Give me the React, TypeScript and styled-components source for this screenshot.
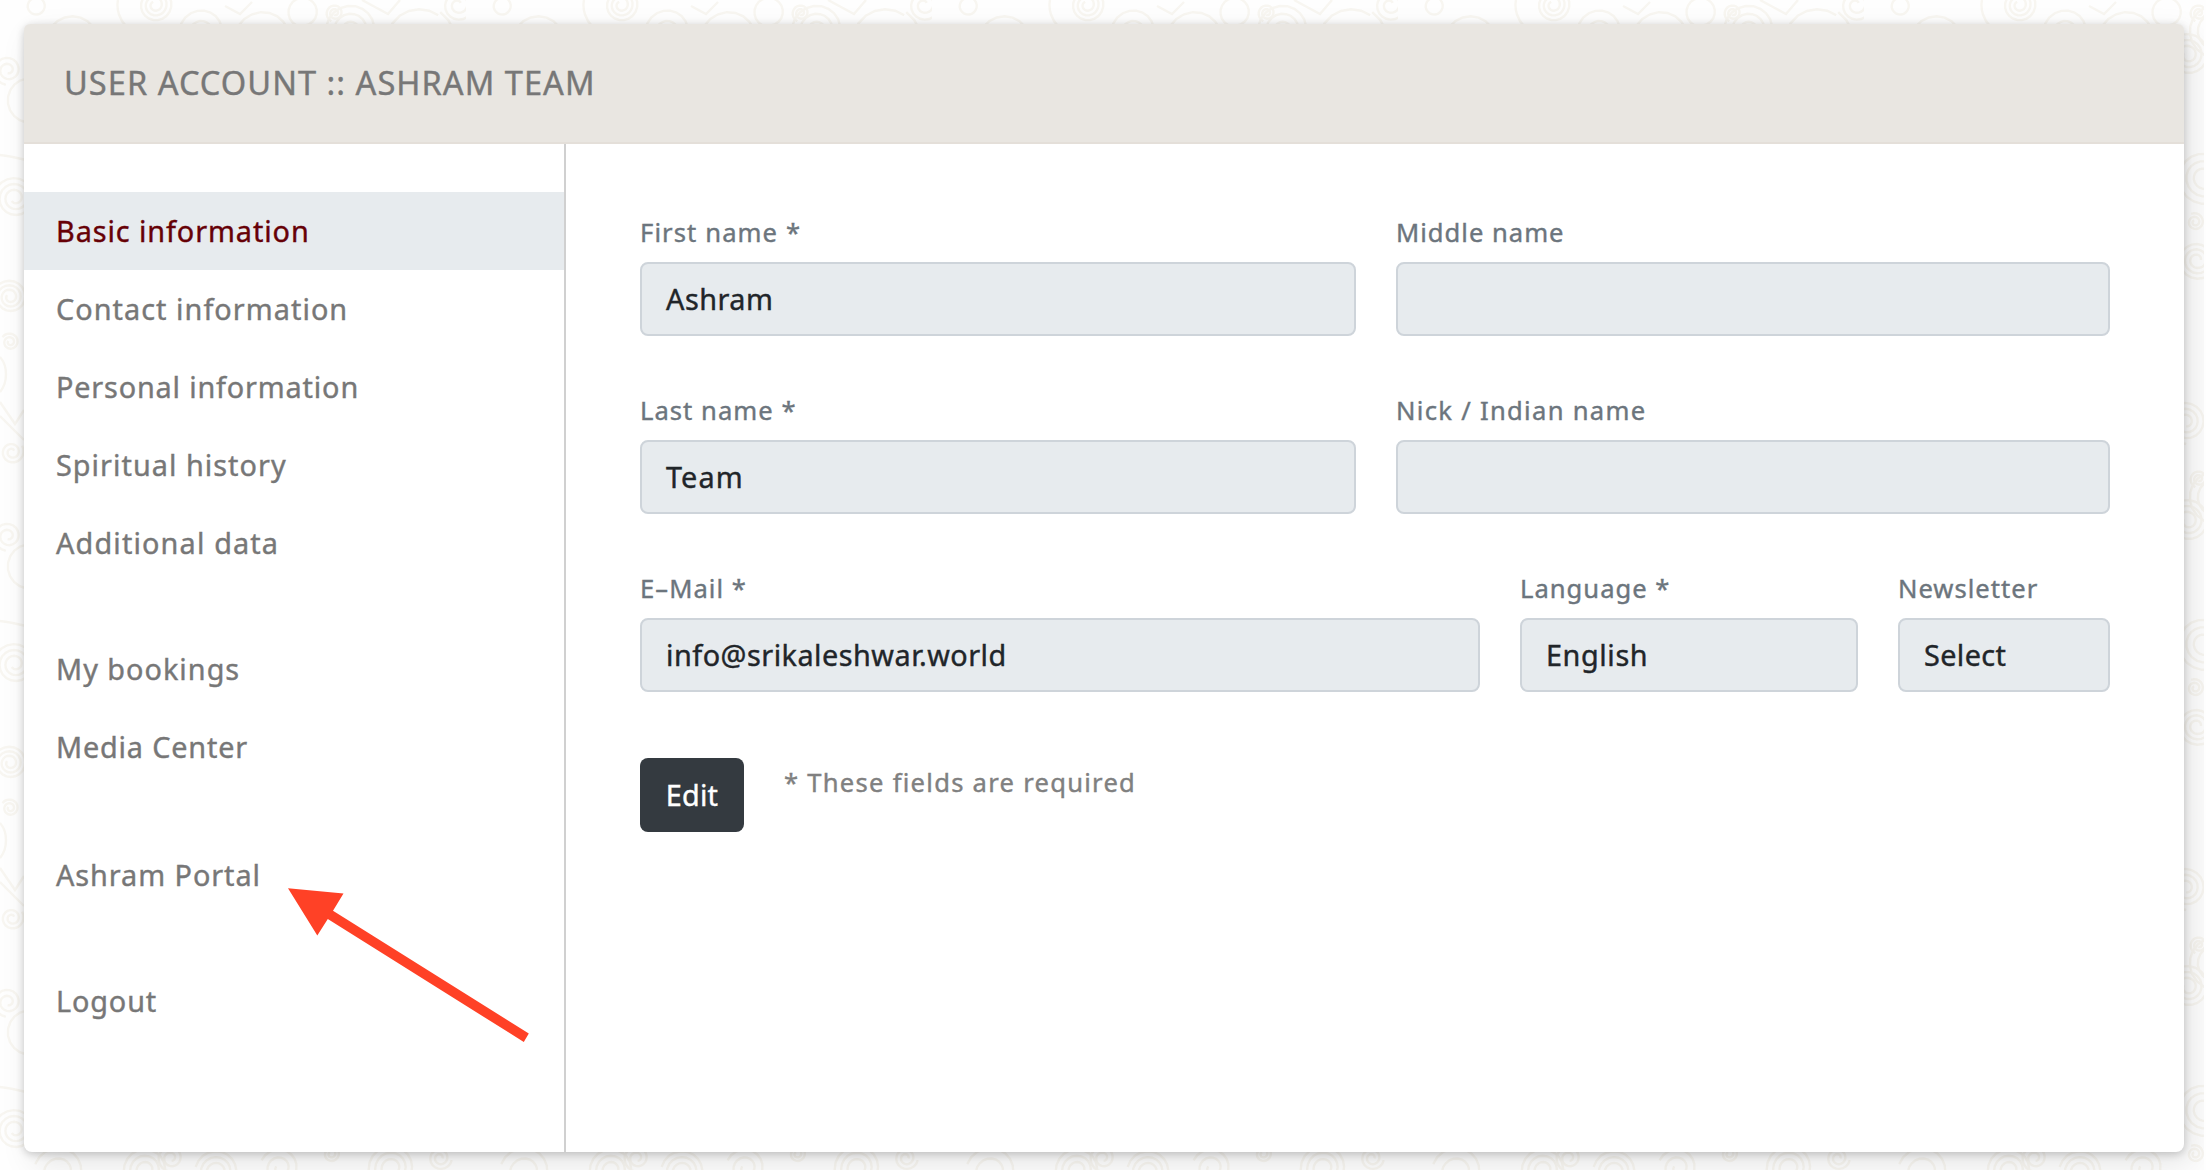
import React from "react";
import styled, { createGlobalStyle } from "styled-components";

const GlobalStyle = createGlobalStyle`
  *, *::before, *::after { box-sizing: border-box; }
  html, body { margin: 0; padding: 0; background: #fefefe; }
  body {
    font-family: "Noto Sans", "Open Sans", sans-serif;
    -webkit-text-stroke: 0.4px currentColor;
    overflow: hidden;
  }
`;

const Page = styled.div`
  position: relative;
  display: flex;
  width: 2204px;
  height: 1170px;
  padding: 24px 20px 18px 24px;
  overflow: hidden;
`;

const Backdrop = styled.svg`
  position: absolute;
  inset: 0;
  width: 100%;
  height: 100%;
`;

const Card = styled.section`
  position: relative;
  flex: 1;
  display: flex;
  flex-direction: column;
  background: #fff;
  border-radius: 8px;
  box-shadow: 0 2px 8px rgba(0, 0, 0, 0.2), 8px 12px 32px rgba(0, 0, 0, 0.1);
`;

const CardHeader = styled.header`
  height: 120px;
  display: flex;
  align-items: center;
  padding: 0 40px 1px;
  background: #e9e6e1;
  border-bottom: 2px solid #e4dfd9;
  border-radius: 6px 6px 0 0;
`;

const Title = styled.h1`
  margin: 0;
  font-size: 32.6px;
  font-weight: 400;
  line-height: 40px;
  letter-spacing: 1.03px;
  color: #777;
`;

const CardBody = styled.div`
  flex: 1;
  display: flex;
`;

const Sidebar = styled.nav`
  width: 542px;
  padding-top: 48px;
  border-right: 2px solid #d0d0d0;
`;

const NavGroup = styled.ul<{ $gap: number }>`
  list-style: none;
  margin: 0 0 ${(p) => p.$gap}px;
  padding: 0;
`;

const NavItem = styled.li<{ $active?: boolean; $tracking: number }>`
  height: 78px;
  padding-left: 32px;
  font-size: 28.8px;
  line-height: 78px;
  letter-spacing: ${(p) => p.$tracking}px;
  color: ${(p) => (p.$active ? "#660006" : "#777")};
  background: ${(p) => (p.$active ? "#e7ebee" : "transparent")};
`;

const Form = styled.form`
  flex: 1;
  display: flex;
  flex-direction: column;
  gap: 54px;
  padding: 68px 74px 0;
`;

const FieldRow = styled.div<{ $columns: string }>`
  display: grid;
  grid-template-columns: ${(p) => p.$columns};
  column-gap: 40px;
`;

const Field = styled.div`
  display: flex;
  flex-direction: column;
  gap: 10px;
`;

const Label = styled.label<{ $tracking: number }>`
  padding-top: 1px;
  height: 40px;
  font-size: 25.6px;
  line-height: 40px;
  letter-spacing: ${(p) => p.$tracking}px;
  color: #6c757d;
`;

const Value = styled.div<{ $tracking: number }>`
  height: 74px;
  padding: 0 24px;
  border: 2px solid #ced4da;
  border-radius: 8px;
  background: #e7ebee;
  color: #212529;
  font-size: 28.8px;
  line-height: 70px;
  letter-spacing: ${(p) => p.$tracking}px;
`;

const Actions = styled.div`
  display: flex;
  align-items: flex-start;
  gap: 40px;
  margin-top: 12px;
`;

const EditButton = styled.button`
  width: 104px;
  height: 74px;
  padding: 0;
  border: 0;
  border-radius: 8px;
  background: #343a40;
  color: #fff;
  font-family: inherit;
  font-size: 28.8px;
  line-height: 74px;
  letter-spacing: 0.2px;
`;

const Hint = styled.span`
  margin-top: 5px;
  font-size: 25.6px;
  line-height: 40px;
  letter-spacing: 1.26px;
  color: #808080;
`;

const Pointer = styled.svg`
  position: absolute;
  left: 260px;
  top: 860px;
  width: 250px;
  height: 164px;
`;

type Item = { text: string; tracking: number; active?: boolean };
type FieldData = { label: string; labelTracking: number; value: string; tracking: number };

const groups: { gap: number; items: Item[] }[] = [
  {
    gap: 48,
    items: [
      { text: "Basic information", tracking: 0.92, active: true },
      { text: "Contact information", tracking: 1.05 },
      { text: "Personal information", tracking: 0.84 },
      { text: "Spiritual history", tracking: 1.04 },
      { text: "Additional data", tracking: 1.16 },
    ],
  },
  {
    gap: 50,
    items: [
      { text: "My bookings", tracking: 1.02 },
      { text: "Media Center", tracking: 0.84 },
    ],
  },
  { gap: 48, items: [{ text: "Ashram Portal", tracking: 0.95 }] },
  { gap: 0, items: [{ text: "Logout", tracking: 0.88 }] },
];

const rows: { columns: string; fields: FieldData[] }[] = [
  {
    columns: "716px 714px",
    fields: [
      { label: "First name *", labelTracking: 1.1, value: "Ashram", tracking: 0.5 },
      { label: "Middle name", labelTracking: 1, value: "", tracking: 0 },
    ],
  },
  {
    columns: "716px 714px",
    fields: [
      { label: "Last name *", labelTracking: 1.03, value: "Team", tracking: 1.1 },
      { label: "Nick / Indian name", labelTracking: 1.3, value: "", tracking: 0 },
    ],
  },
  {
    columns: "840px 338px 212px",
    fields: [
      { label: "E–Mail *", labelTracking: 1.05, value: "info@srikaleshwar.world", tracking: 0.5 },
      { label: "Language *", labelTracking: 1, value: "English", tracking: 0.6 },
      { label: "Newsletter", labelTracking: 1, value: "Select", tracking: 0.4 },
    ],
  },
];

/* Curls of the wallpaper tile: centre, outer radius and number of turns. */
const curls: [number, number, number, number][] = [
  [155, 5, 18, 3], [75, 42, 38, 2], [203, 32, 26, 2], [265, 40, 36, 2], [303, 12, 15, 1],
  [352, 30, 30, 3], [335, 13, 9, 2], [458, 5, 17, 2], [420, 42, 36, 1], [36, 6, 9, 1],
  [8, 70, 15, 2], [30, 100, 24, 1], [15, 198, 22, 3], [10, 297, 17, 3], [10, 342, 9, 2],
  [12, 452, 12, 2], [324, 55, 22, 3], [340, 177, 28, 3], [331, 222, 9, 2], [333, 260, 20, 3],
  [322, 422, 22, 3], [146, 238, 24, 3], [171, 226, 14, 2], [217, 240, 22, 3],
  [60, 240, 26, 2], [280, 236, 20, 2], [392, 236, 24, 3], [440, 226, 12, 2],
];

const spiral = (cx: number, cy: number, r: number, turns: number) => {
  const steps = turns * 20;
  return Array.from({ length: steps + 1 }, (_, i) => {
    const a = (i / 20) * Math.PI * 2 + cx;
    const d = r * (1 - (i / steps) * (turns > 1 ? 0.8 : 0.1));
    return `${i ? "L" : "M"}${(cx + d * Math.cos(a)).toFixed(1)} ${(cy + d * Math.sin(a)).toFixed(1)}`;
  }).join("");
};

export default function App() {
  return (
    <>
      <GlobalStyle />
      <Page>
        <Backdrop aria-hidden="true">
          <defs>
            <pattern id="curls" width="466" height="466" patternUnits="userSpaceOnUse">
              <g fill="none" stroke="#f8f6f1" strokeWidth="2.4">
                {curls.map(([x, y, r, t]) => (
                  <path key={`${x}-${y}`} d={spiral(x, y, r, t)} />
                ))}
                <path d="M0 357C8 366 8 382 0 392M0 402L15 424L24 410M0 416L24 440M0 155C10 156 18 158 26 160" />
                <path d="M118 0C116 10 120 20 126 26M362 0L388 14L400 0M225 6L240 14L252 2" />
              </g>
            </pattern>
          </defs>
          <rect width="100%" height="100%" fill="url(#curls)" />
        </Backdrop>
        <Card>
          <CardHeader>
            <Title>USER ACCOUNT :: ASHRAM TEAM</Title>
          </CardHeader>
          <CardBody>
            <Sidebar>
              {groups.map((group) => (
                <NavGroup key={group.items[0].text} $gap={group.gap}>
                  {group.items.map((item) => (
                    <NavItem key={item.text} $active={item.active} $tracking={item.tracking}>
                      {item.text}
                    </NavItem>
                  ))}
                </NavGroup>
              ))}
            </Sidebar>
            <Form>
              {rows.map((row) => (
                <FieldRow key={row.fields[0].label} $columns={row.columns}>
                  {row.fields.map((field) => (
                    <Field key={field.label}>
                      <Label $tracking={field.labelTracking}>{field.label}</Label>
                      <Value $tracking={field.tracking}>{field.value}</Value>
                    </Field>
                  ))}
                </FieldRow>
              ))}
              <Actions>
                <EditButton type="button">Edit</EditButton>
                <Hint>* These fields are required</Hint>
              </Actions>
            </Form>
          </CardBody>
          <Pointer viewBox="284 884 250 164" aria-hidden="true">
            <path
              d="M288 888.2L343.5 893.5L333 910.8L528.8 1033.5L523.8 1042L327.8 919L317.3 935.6Z"
              fill="#ff4126"
            />
          </Pointer>
        </Card>
      </Page>
    </>
  );
}
